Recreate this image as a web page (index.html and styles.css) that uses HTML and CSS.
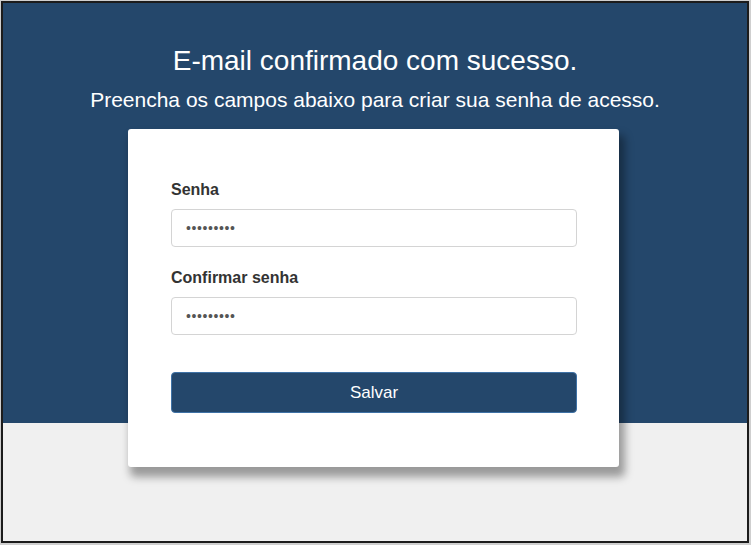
FILE: index.html
```html
<!DOCTYPE html>
<html lang="pt-BR">
<head>
<meta charset="utf-8">
<title>E-mail confirmado</title>
<link rel="stylesheet" href="styles.css">
</head>
<body>
<div class="frame">
  <div class="page">
    <h1 class="title">E-mail confirmado com sucesso.</h1>
    <p class="subtitle">Preencha os campos abaixo para criar sua senha de acesso.</p>
    <form class="card">
      <div class="field">
        <label class="label" for="senha">Senha</label>
        <input class="input" id="senha" type="password" value="123456789">
      </div>
      <div class="field">
        <label class="label" for="confirmar">Confirmar senha</label>
        <input class="input" id="confirmar" type="password" value="123456789">
      </div>
      <button class="button" type="button">Salvar</button>
    </form>
  </div>
</div>
</body>
</html>
```
FILE: styles.css
```css
html, body {
  margin: 0;
  padding: 0;
}
body {
  background: #cfcfcf;
  width: 751px;
  height: 545px;
  overflow: hidden;
  font-family: "Liberation Sans", Arial, sans-serif;
}
.frame {
  margin: 1px 2px 2px 1px;
  height: 538px;
  border: 2px solid #1c1c1c;
  overflow: hidden;
}
.page {
  height: 100%;
  background: linear-gradient(to bottom, #24476b 0, #24476b 420px, #f0f0f0 420px, #f0f0f0 100%);
  display: flex;
  flex-direction: column;
  align-items: center;
  padding-top: 42px;
  box-sizing: border-box;
}
.title {
  margin: 0;
  font-size: 28px;
  font-weight: 400;
  line-height: 31px;
  color: #ffffff;
  text-align: center;
}
.subtitle {
  margin: 12px 0 0;
  font-size: 21px;
  line-height: 24px;
  color: #ffffff;
  text-align: center;
}
.card {
  margin: 17px 0 0 -3px;
  width: 491px;
  box-sizing: border-box;
  background: #ffffff;
  border-radius: 3px;
  padding: 51px 42px 54px 43px;
  box-shadow: 4px 8px 9px 2px rgba(0, 0, 0, 0.36);
  display: flex;
  flex-direction: column;
}
.field {
  display: flex;
  flex-direction: column;
  margin-bottom: 21px;
}
.field + .field {
  margin-bottom: 37px;
}
.label {
  font-size: 16px;
  line-height: 20px;
  font-weight: 700;
  color: #333333;
  margin-bottom: 9px;
}
.input {
  height: 38px;
  box-sizing: border-box;
  border: 1px solid #d4d4d4;
  border-radius: 4px;
  padding: 0 14px;
  font-family: "Liberation Sans", Arial, sans-serif;
  font-size: 14px;
  color: #555555;
  letter-spacing: 0.6px;
  outline: none;
}
.button {
  height: 41px;
  box-sizing: border-box;
  background: #24476b;
  border: 1px solid #3f72a6;
  border-radius: 4px;
  color: #ffffff;
  font-family: "Liberation Sans", Arial, sans-serif;
  font-size: 17px;
  cursor: pointer;
}
```
